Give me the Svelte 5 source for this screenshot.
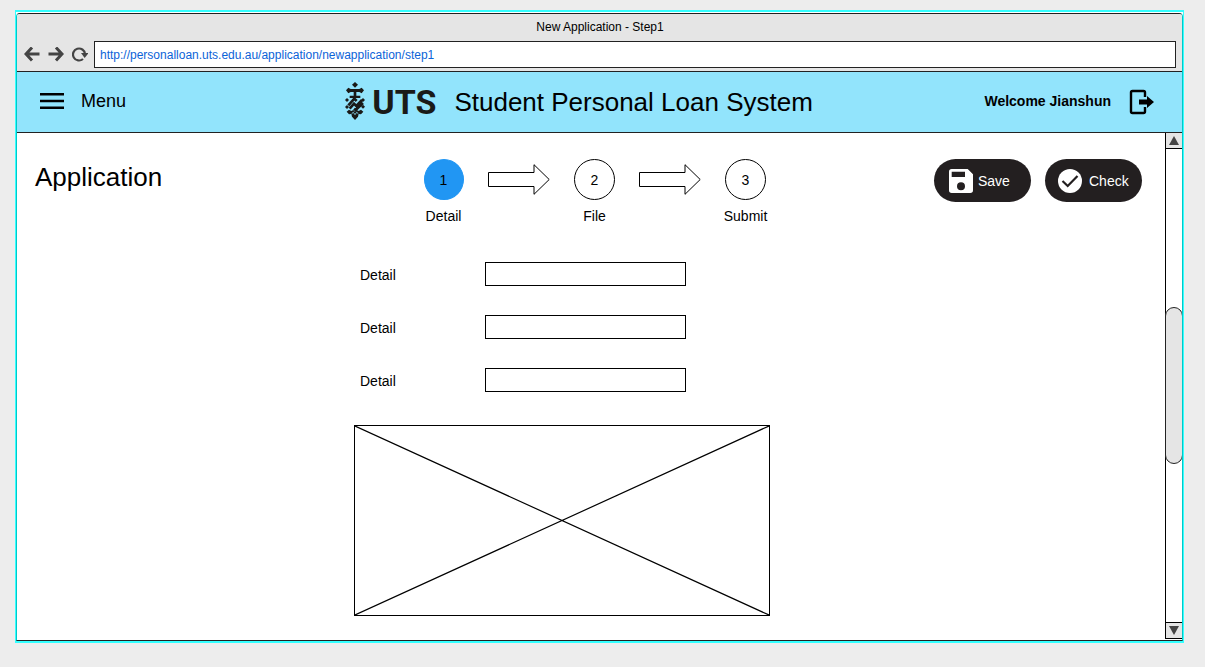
<script>
  let url = $state('http://personalloan.uts.edu.au/application/newapplication/step1');
  const steps = [
    { number: 1, label: 'Detail', active: true },
    { number: 2, label: 'File', active: false },
    { number: 3, label: 'Submit', active: false }
  ];
  let fields = $state([
    { id: 'detail-1', label: 'Detail', value: '' },
    { id: 'detail-2', label: 'Detail', value: '' },
    { id: 'detail-3', label: 'Detail', value: '' }
  ]);
</script>

<div class="frame">
  <div class="window">
    <div class="chrome">
      <div class="tab-title">New Application - Step1</div>
      <div class="toolbar">
        <button class="nav" aria-label="Back">
          <svg width="16" height="16" viewBox="0 0 16 16"><path d="M8 0.500 L2 7 L8 13.500 M2 7 H15.500" fill="none" stroke="#444" stroke-width="3" /></svg>
        </button>
        <button class="nav" aria-label="Forward">
          <svg width="16" height="16" viewBox="0 0 16 16"><path d="M8 0.500 L14 7 L8 13.500 M14 7 H0.500" fill="none" stroke="#444" stroke-width="3" /></svg>
        </button>
        <button class="nav" aria-label="Reload">
          <svg width="16" height="16" viewBox="0 0 16 16"><path d="M11 12 A6 6 0 1 1 13 7" fill="none" stroke="#444" stroke-width="2.2" /><path d="M9 6 H16.500 L12.700 11 Z" fill="#444" /></svg>
        </button>
        <input class="address" type="text" aria-label="Address" bind:value={url} />
      </div>
    </div>

    <header>
      <button class="menu">
        <svg width="24" height="16" viewBox="0 0 24 16" aria-hidden="true"><path d="M0 1.300 H24 M0 8 H24 M0 14.700 H24" stroke="#000" stroke-width="2.600" /></svg>
        <span>Menu</span>
      </button>
      <div class="brand">
        <svg class="crest" width="20" height="38" viewBox="0 0 60 114" aria-hidden="true">
          <g fill="#1a1a18">
            <path d="M30 0 L39 8 L30 17 L21 8 Z" />
            <path d="M3 25 L10 17 L17 21 H43 L50 17 L57 25 L50 34 L43 30 H34 V41 H46 V48 H14 V41 H26 V30 H17 L10 34 Z" />
            <path d="M6 48 L12 54 L6 60 L0 54 Z M54 48 L60 54 L54 60 L48 54 Z M6 69 L12 75 L6 81 L0 75 Z M54 68 L60 74 L54 80 L48 74 Z" />
            <path d="M12 83 L19 87 L25 84 L30 89 L35 84 L41 87 L48 83 L55 89 L48 97 L41 96 L39 104 L30 114 L21 104 L19 96 L12 97 L5 89 Z" />
          </g>
          <path d="M10 70 L28 50 L35 57 M14 80 L27 65 L34 72 L51 54 M27 80 L32 84 L54 63" fill="none" stroke="#1a1a18" stroke-width="8" />
          <path d="M20 95 L25 91 L30 98 L35 91 L40 95" fill="none" stroke="#92e4fc" stroke-width="2.500" />
        </svg>
        <span class="wordmark">UTS</span>
        <span class="system">Student Personal Loan System</span>
      </div>
      <div class="user">
        <span>Welcome Jianshun</span>
        <button class="logout" aria-label="Log out">
          <svg width="26" height="26" viewBox="0 0 26 26"><path d="M16 8 V3.500 Q16 2 14.500 2 H3.500 Q2 2 2 3.500 V22.500 Q2 24 3.500 24 H14.500 Q16 24 16 22.500 V18" fill="none" stroke="#000" stroke-width="2.400" /><path d="M10 10.500 H18 V7 L25 13 L18 19 V15.500 H10 Z" fill="#000" /></svg>
        </button>
      </div>
    </header>

    <div class="body">
      <main>
        <div class="top">
          <h1>Application</h1>
          <div class="steps">
            {#each steps as step, i}
              {#if i > 0}
                <svg class="arrow" width="62" height="31" viewBox="0 0 62 31" aria-hidden="true"><path d="M0.500 8.500 H46 V0.700 L61.200 15.500 L46 30.300 V22.500 H0.500 Z" fill="#fff" stroke="#000" /></svg>
              {/if}
              <div class="step">
                <div class="circle" class:active={step.active}>{step.number}</div>
                <span>{step.label}</span>
              </div>
            {/each}
          </div>
          <div class="actions">
            <button class="pill">
              <svg width="24" height="24" viewBox="0 0 24 24" aria-hidden="true"><path fill-rule="evenodd" fill="#fff" d="M2.700 0 H18.700 L24 5.300 V21.300 Q24 24 21.300 24 H2.700 Q0 24 0 21.300 V2.700 Q0 0 2.700 0 Z M2.700 2.700 V8 H16 V2.700 Z M12 13.300 A4 4 0 1 0 12 21.300 A4 4 0 1 0 12 13.300 Z" /></svg>
              Save
            </button>
            <button class="pill">
              <svg width="24" height="24" viewBox="0 0 24 24" aria-hidden="true"><circle cx="12" cy="12" r="12" fill="#fff" /><path d="M4.500 12 L9.700 17 L19.500 7" fill="none" stroke="#231f20" stroke-width="2.200" /></svg>
              Check
            </button>
          </div>
        </div>

        <div class="details">
          <form>
            {#each fields as field}
              <div class="row">
                <label for={field.id}>{field.label}</label>
                <input id={field.id} type="text" bind:value={field.value} />
              </div>
            {/each}
          </form>
          <svg class="placeholder" viewBox="0 0 100 100" preserveAspectRatio="none" aria-hidden="true"><path d="M0 0 L100 100 M100 0 L0 100" stroke="#000" stroke-width="1.200" vector-effect="non-scaling-stroke" /></svg>
        </div>
      </main>

      <div class="scrollbar">
        <button class="scroll-up" aria-label="Scroll up">
          <svg width="10" height="9" viewBox="0 0 10 9"><path d="M5 0 L10 9 H0 Z" fill="#444" /></svg>
        </button>
        <div class="track"><div class="thumb"></div></div>
        <button class="scroll-down" aria-label="Scroll down">
          <svg width="10" height="9" viewBox="0 0 10 9"><path d="M0 0 H10 L5 9 Z" fill="#444" /></svg>
        </button>
      </div>
    </div>
  </div>
</div>

<style>
  :global(body) {
    margin: 0;
    background: #ededed;
    font-family: "Liberation Sans", Arial, sans-serif;
    font-size: 14px;
    color: #000;
  }
  :global(#app) {
    display: flow-root;
  }
  * {
    box-sizing: border-box;
  }
  button {
    font: inherit;
    color: inherit;
    border: 0;
    padding: 0;
    background: none;
    display: flex;
    align-items: center;
    cursor: pointer;
  }
  svg {
    display: block;
    flex: none;
  }
  .frame {
    margin: 10px 21px 24px 15px;
    padding-top: 1px;
    border: solid #33ffff;
    border-width: 2px 1px;
    background: #fff;
  }
  .window {
    border: 1px solid #222;
    border-left-color: #00c8c8;
    border-right-color: #00c8c8;
    border-radius: 4px 4px 0 0;
    overflow: hidden;
  }
  .chrome {
    background: #e5e5e5;
    border-bottom: 1px solid #222;
    font-size: 12px;
    padding: 5px 6px 3px 7px;
  }
  .tab-title {
    line-height: 16px;
    text-align: center;
    margin-bottom: 6px;
  }
  .toolbar {
    display: flex;
    align-items: center;
    gap: 8px;
  }
  .address {
    flex: 1;
    min-width: 0;
    height: 27px;
    margin-left: -2px;
    padding: 0 5px;
    border: 1px solid #222;
    background: #fff;
    color: #0b63d8;
    font: inherit;
    outline: none;
  }
  header {
    display: grid;
    grid-template-columns: 329fr auto 370fr;
    align-items: center;
    height: 61px;
    padding-bottom: 2px;
    background: #92e4fc;
    border-bottom: 1px solid #222;
  }
  .menu {
    gap: 17px;
    padding-left: 23px;
    font-size: 18px;
  }
  .brand {
    display: flex;
    align-items: center;
    white-space: nowrap;
  }
  .wordmark {
    margin: 0 18px 0 7px;
    padding-top: 2px;
    font: bold 34px/40px Roboto, sans-serif;
    color: #1a1a18;
  }
  .system {
    padding-top: 2px;
    font-size: 26px;
  }
  .user {
    display: flex;
    align-items: center;
    justify-content: flex-end;
    gap: 18px;
    padding-right: 27px;
    font-weight: bold;
  }
  .logout {
    padding-top: 2px;
  }
  .body {
    display: flex;
  }
  main {
    flex: 1;
    min-width: 0;
    padding-bottom: 24px;
  }
  .top {
    display: grid;
    grid-template-columns: 387fr auto 375fr;
    align-items: start;
    padding: 26px 23px 0 18px;
  }
  h1 {
    margin: 0;
    font-size: 26px;
    font-weight: normal;
    line-height: 36px;
  }
  .steps {
    display: flex;
    gap: 24px;
  }
  .step {
    width: 41px;
    display: flex;
    flex-direction: column;
    align-items: center;
    gap: 8px;
    line-height: 16px;
    white-space: nowrap;
  }
  .circle {
    width: 41px;
    height: 41px;
    border: 1px solid #000;
    border-radius: 50%;
    display: grid;
    place-items: center;
  }
  .circle.active {
    width: 40px;
    background: #2196f3;
    border-color: #2196f3;
  }
  .arrow {
    margin-top: 5px;
  }
  .actions {
    display: flex;
    justify-content: flex-end;
    gap: 14px;
  }
  .pill {
    width: 97px;
    height: 43px;
    padding-left: 15px;
    gap: 5px;
    border-radius: 22px;
    background: #231f20;
    color: #fff;
  }
  .pill + .pill {
    padding-left: 13px;
    gap: 7px;
  }
  .details {
    display: grid;
    grid-template-columns: 337fr 416px 395fr;
    padding-top: 38px;
    row-gap: 33px;
  }
  .details > * {
    grid-column: 2;
  }
  form {
    display: grid;
    gap: 29px;
    padding-left: 6px;
  }
  .row {
    display: grid;
    grid-template-columns: 125px 201px;
    align-items: center;
  }
  .row label {
    padding-top: 2px;
  }
  .row input {
    height: 24px;
    padding: 0 6px;
    border: 1px solid #000;
    border-radius: 0;
    background: #fff;
    font: inherit;
  }
  .placeholder {
    width: 100%;
    height: 191px;
    border: 1px solid #000;
  }
  .scrollbar {
    width: 17px;
    margin-bottom: 1px;
    border-left: 1px solid #000;
    display: flex;
    flex-direction: column;
  }
  .scroll-up,
  .scroll-down {
    height: 16px;
    justify-content: center;
    background: #e5e5e5;
    border-bottom: 1px solid #000;
  }
  .scroll-down {
    height: 17px;
    border-top: 1px solid #000;
  }
  .track {
    flex: 1;
    display: flex;
    flex-direction: column;
    justify-content: center;
  }
  .thumb {
    height: 33%;
    margin: 0 -1px;
    border: 1px solid #222;
    border-radius: 9px;
    background: #e5e5e5;
  }
</style>
